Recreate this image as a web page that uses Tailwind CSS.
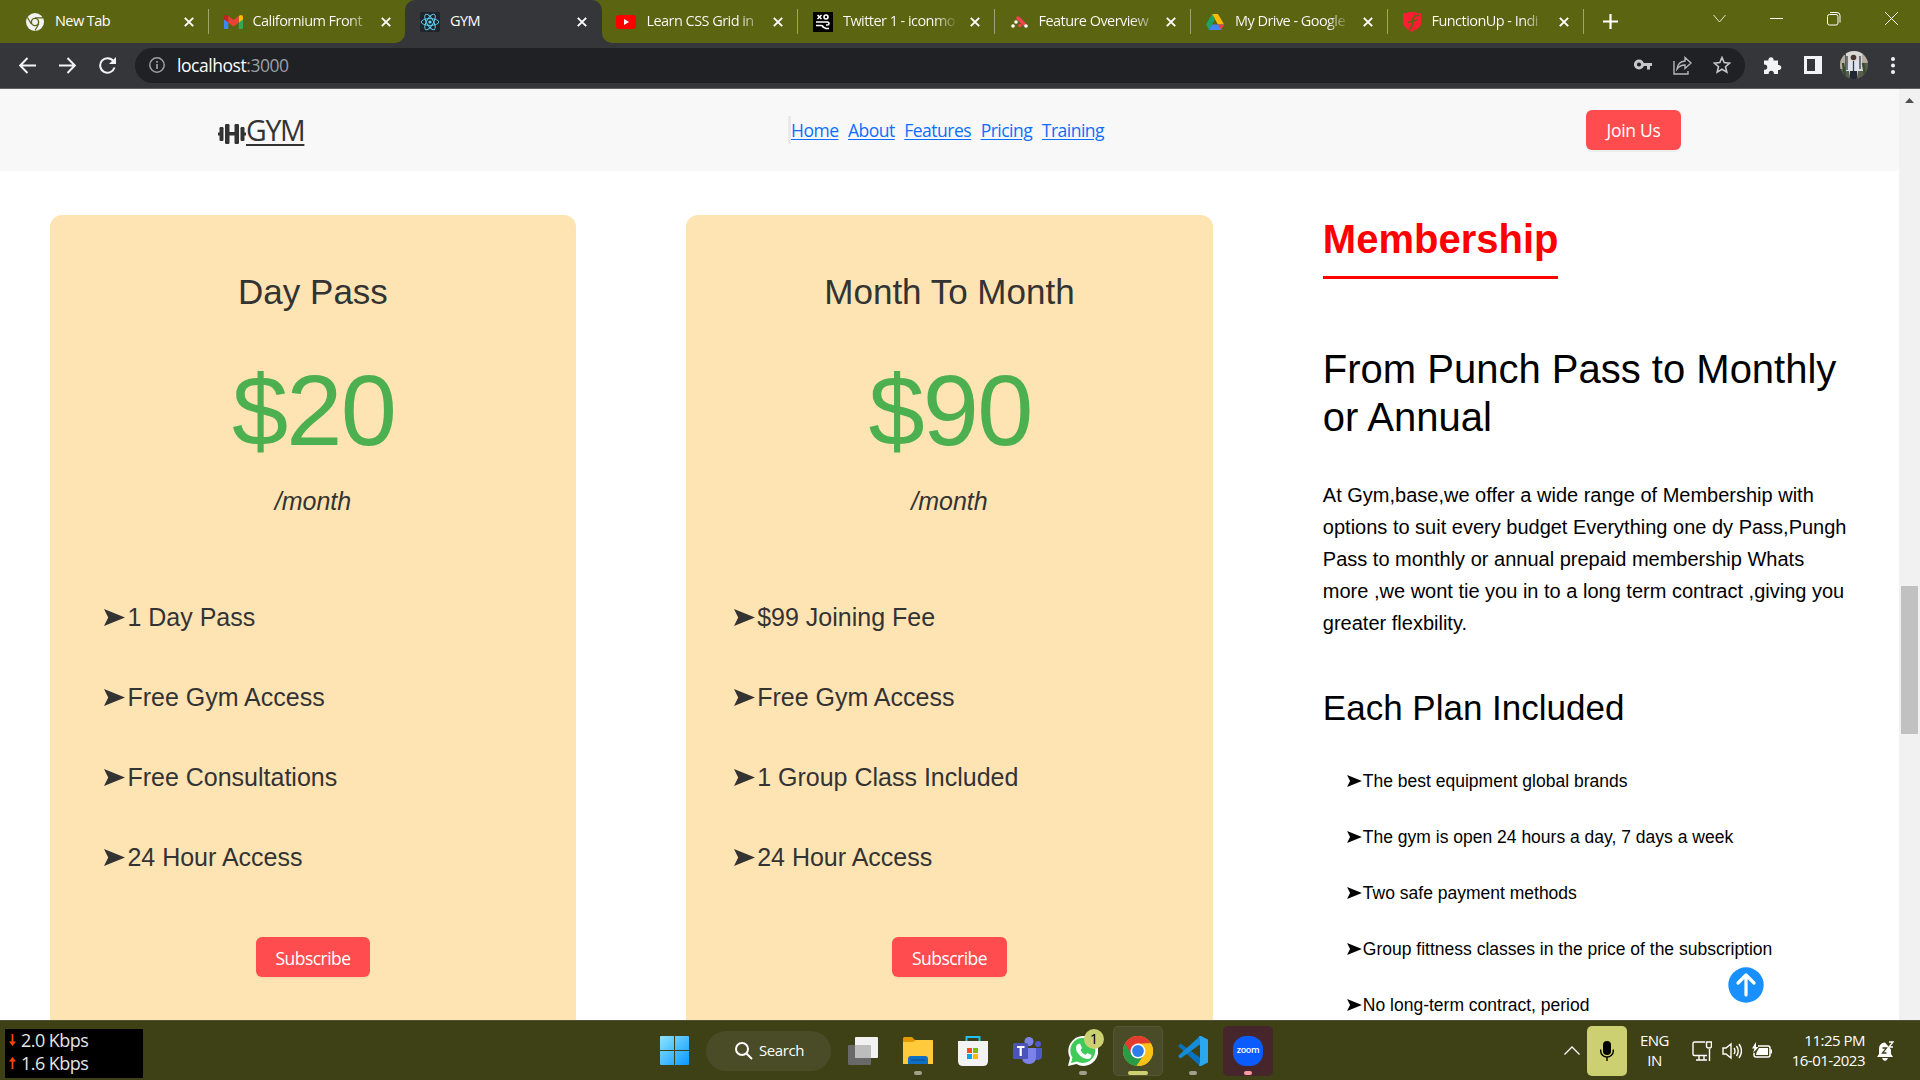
<!DOCTYPE html>
<html lang="en">
<head>
<meta charset="utf-8">
<title>GYM</title>
<script src="https://cdn.jsdelivr.net/npm/@tailwindcss/browser@4"></script>
</head>
<body class="w-[1920px] h-[1080px] overflow-hidden flex flex-col bg-white font-['Open_Sans',sans-serif]">
<svg class="hidden">
  <symbol id="close" viewBox="0 0 10 10"><path d="M.8.8l8.4 8.4M9.2.8L.8 9.2" stroke="#fff" stroke-width="1.9" fill="none"/></symbol>
  <symbol id="bullet" viewBox="0 0 21 17"><path d="M0 0L21 8.500 0 17 4.200 8.500z" fill="currentColor"/></symbol>
</svg>

<!-- Tab strip -->
<header class="h-[43px] shrink-0 bg-[#5b6411] flex text-white text-[14.500px] tracking-[-0.550px] pl-3">
  <div class="w-[196.500px] flex items-center pl-[14px]">
    <svg class="size-[18px] shrink-0" viewBox="0 0 18 18"><circle cx="9" cy="9" r="9" fill="#f1f3f4"/><circle cx="9" cy="9" r="4.300" fill="#5b6411"/><circle cx="9" cy="9" r="2.900" fill="#f1f3f4"/><path d="M9 4.800h8M5.300 11L1.500 4.500M12.700 11L9 17.500" stroke="#5b6411" stroke-width="1.200"/></svg>
    <span class="ml-[11px] -mt-px w-[117px] overflow-hidden whitespace-nowrap">New Tab</span>
    <svg class="ml-3 size-[10px] shrink-0"><use href="#close"/></svg>
    <i class="ml-[14px] w-px h-[25px] bg-[#a0a36f]"></i>
  </div>
  <div class="w-[196.500px] flex items-center pl-[15px]">
    <svg class="w-[19px] h-[14px] shrink-0" viewBox="0 0 19 14"><path d="M0 2v11a1 1 0 001 1h3.300V5z" fill="#4285f4"/><path d="M19 2v11a1 1 0 01-1 1h-3.300V5z" fill="#34a853"/><path d="M14.700 1L17 0q2 0 2 2v2.500l-4.300 3z" fill="#fbbc04"/><path d="M4.300 1L2 0Q0 0 0 2v2.500l4.300 3z" fill="#c5221f"/><path d="M4.300 1l5.200 4 5.200-4v6.500l-5.200 4-5.200-4z" fill="#ea4335"/></svg>
    <span class="ml-[10px] -mt-px w-[119px] overflow-hidden whitespace-nowrap bg-linear-to-r from-white from-80% to-white/0 bg-clip-text text-transparent">Californium Front</span>
    <svg class="ml-[9px] size-[10px] shrink-0"><use href="#close"/></svg>
  </div>
  <div class="relative w-[196.500px] flex items-center pl-[15px] bg-[#35363a] rounded-t-[10px]">
    <svg class="absolute bottom-0 -left-[10px] size-[10px]" viewBox="0 0 10 10"><path d="M10 0v10H0A10 10 0 0010 0z" fill="#35363a"/></svg>
    <svg class="absolute bottom-0 -right-[10px] size-[10px]" viewBox="0 0 10 10"><path d="M0 0v10h10A10 10 0 010 0z" fill="#35363a"/></svg>
    <svg class="size-5 shrink-0" viewBox="0 0 20 20"><rect width="20" height="20" rx="2" fill="#20232a"/><g fill="none" stroke="#61dafb" stroke-width=".9"><ellipse cx="10" cy="10" rx="8.800" ry="3.400"/><ellipse cx="10" cy="10" rx="8.800" ry="3.400" transform="rotate(60 10 10)"/><ellipse cx="10" cy="10" rx="8.800" ry="3.400" transform="rotate(120 10 10)"/></g><circle cx="10" cy="10" r="1.600" fill="#61dafb"/></svg>
    <span class="ml-[10px] -mt-px w-[118px] overflow-hidden whitespace-nowrap">GYM</span>
    <svg class="ml-[9px] size-[10px] shrink-0"><use href="#close"/></svg>
  </div>
  <div class="w-[196.500px] flex items-center pl-[14px]">
    <svg class="w-5 h-[14px] shrink-0" viewBox="0 0 20 14"><rect width="20" height="14" rx="3" fill="#f00"/><path d="M8 4l5 3-5 3z" fill="#fff"/></svg>
    <span class="ml-[11px] -mt-px w-[116px] overflow-hidden whitespace-nowrap bg-linear-to-r from-white from-80% to-white/20 bg-clip-text text-transparent">Learn CSS Grid in</span>
    <svg class="ml-3 size-[10px] shrink-0"><use href="#close"/></svg>
    <i class="ml-[14px] w-px h-[25px] bg-[#a0a36f]"></i>
  </div>
  <div class="w-[196.500px] flex items-center pl-[15px]">
    <svg class="size-5 shrink-0" viewBox="0 0 20 20"><rect width="20" height="20" fill="#000"/><g fill="none" stroke="#fff" stroke-width="1.600"><path d="M4.500 3l4 4M8.500 3l-4 4"/><circle cx="13" cy="5" r="2"/><path d="M3 10h11.500a1.500 1.500 0 010 3H13M3 13.500h5q2 0 2 1.500l3 1.500h3"/></g></svg>
    <span class="ml-[10px] -mt-px w-[115px] overflow-hidden whitespace-nowrap bg-linear-to-r from-white from-80% to-white/0 bg-clip-text text-transparent">Twitter 1 - iconmo</span>
    <svg class="ml-3 size-[10px] shrink-0"><use href="#close"/></svg>
    <i class="ml-[14px] w-px h-[25px] bg-[#a0a36f]"></i>
  </div>
  <div class="w-[196.500px] flex items-center pl-[16px]">
    <svg class="w-[17px] h-[12px] shrink-0" viewBox="0 0 17 12"><path d="M7 2l6 6" stroke="#f44250" stroke-width="3.500" stroke-linecap="round"/><g fill="#fff"><circle cx="2" cy="10" r="1.800"/><circle cx="5" cy="6" r="1.800"/><circle cx="15" cy="10" r="1.800"/></g><circle cx="9" cy="9.500" r="1.800" fill="#f44250"/></svg>
    <span class="ml-[11px] mr-px -mt-px w-[115px] overflow-hidden whitespace-nowrap bg-linear-to-r from-white from-80% to-white/30 bg-clip-text text-transparent">Feature Overview</span>
    <svg class="ml-3 size-[10px] shrink-0"><use href="#close"/></svg>
    <i class="ml-[14px] w-px h-[25px] bg-[#a0a36f]"></i>
  </div>
  <div class="w-[196.500px] flex items-center pl-[15px]">
    <svg class="w-[18px] h-4 shrink-0" viewBox="0 0 18 16"><path d="M6 0h6l6 10.500h-6z" fill="#ffba00"/><path d="M6 0l3 5.300L3 16 0 10.500z" fill="#1ea362"/><path d="M5.800 10.500H18L15 16H3z" fill="#4285f4"/><path d="M12 10.500h6L15 16z" fill="#ea4335"/></svg>
    <span class="ml-[11px] mr-px -mt-px w-[115px] overflow-hidden whitespace-nowrap bg-linear-to-r from-white from-80% to-white/0 bg-clip-text text-transparent">My Drive - Google</span>
    <svg class="ml-3 size-[10px] shrink-0"><use href="#close"/></svg>
    <i class="ml-[14px] w-px h-[25px] bg-[#a0a36f]"></i>
  </div>
  <div class="w-[196.500px] flex items-center pl-[15px]">
    <svg class="w-[18px] h-[20px] shrink-0" viewBox="0 0 18 20"><path d="M0 1q5 .5 6-1h6q1 1.500 6 1V12q-1 4-6.500 6L9 20l-2-1Q1 15 0 12z" fill="#fa1e32"/><path d="M16 3.500q-6-.5-6.500 4.500v3q0 4-3 6.500M5 10.500l9-2.500" stroke="#5b6411" stroke-width="1.600" fill="none"/></svg>
    <span class="ml-[11px] mr-px -mt-px w-[115px] overflow-hidden whitespace-nowrap bg-linear-to-r from-white from-80% to-white/0 bg-clip-text text-transparent">FunctionUp - Indi</span>
    <svg class="ml-3 size-[10px] shrink-0"><use href="#close"/></svg>
    <i class="ml-[14px] w-px h-[25px] bg-[#a0a36f]"></i>
  </div>
  <div class="flex items-center pl-[19px]"><svg class="size-[15px]" viewBox="0 0 15 15"><path d="M7.500 0v15M0 7.500h15" stroke="#fff" stroke-width="2.200"/></svg></div>
  <div class="ml-auto flex pt-3 pr-[22px] items-start">
    <svg class="w-[13px] h-[13px]" viewBox="0 0 13 13" fill="none" stroke="#e4e6cf"><path d="M.5 3l6 7 6-7"/></svg>
    <svg class="ml-11 w-[13px] h-[13px]" viewBox="0 0 13 13" stroke="#fff"><path d="M0 6.500h13"/></svg>
    <svg class="ml-11 w-[14px] h-[14px]" viewBox="0 0 14 14" fill="none" stroke="#fff"><rect x=".5" y="2.500" width="10.500" height="10.500" rx="2"/><path d="M3 .5h7q3 0 3 3v7"/></svg>
    <svg class="ml-11 w-[13px] h-[13px]" viewBox="0 0 13 13" stroke="#fff"><path d="M0 0l13 13M13 0L0 13"/></svg>
  </div>
</header>

<!-- Toolbar -->
<div class="h-[46px] shrink-0 bg-[#35363a] border-b border-[#5f6063] flex items-center pl-[19px] pr-[19px] pb-px">
  <svg class="size-[17px]" viewBox="0 0 17 17" fill="none" stroke="#f1f3f4" stroke-width="1.900"><path d="M17 8.500H1.500M8.500 1L1.200 8.500 8.500 16"/></svg>
  <svg class="ml-[23px] size-[17px]" viewBox="0 0 17 17" fill="none" stroke="#f1f3f4" stroke-width="1.900"><path d="M0 8.500h15.500M8.500 1l7.300 7.500L8.500 16"/></svg>
  <svg class="ml-[23px] size-[17px]" viewBox="0 0 17 17"><path d="M14.300 4A7.300 7.300 0 1015.500 10.500" fill="none" stroke="#f1f3f4" stroke-width="2"/><path d="M17 0v7h-7z" fill="#f1f3f4"/></svg>
  <div class="ml-[19px] w-[1610px] h-[35px] rounded-full bg-[#202124] flex items-center pl-[14px] pr-[14px]">
    <svg class="size-4" viewBox="0 0 16 16"><circle cx="8" cy="8" r="7.200" fill="none" stroke="#9aa0a6" stroke-width="1.500"/><path d="M8 7v5M8 4v1.800" stroke="#9aa0a6" stroke-width="1.700"/></svg>
    <span class="ml-3 text-[17.500px] tracking-[-0.450px] text-[#9aa0a6]"><span class="text-white">localhost</span>:3000</span>
    <svg class="ml-auto w-[18px] h-[12px]" viewBox="0 0 18 12"><circle cx="5" cy="5.500" r="3.600" fill="none" stroke="#c5c7c9" stroke-width="3"/><path d="M8 5.500h10M14.500 5.500v5" stroke="#c5c7c9" stroke-width="3"/></svg>
    <svg class="ml-[21px] size-[19px]" viewBox="0 0 19 19" fill="none" stroke="#b5b7b9" stroke-width="1.400"><path d="M1 5v13h14v-3M4 13q1-7.500 8-8V1.500L18 7l-6 5.500V9q-5 0-8 4z"/></svg>
    <svg class="ml-[21px] size-[18px]" viewBox="0 0 18 18"><path d="M9 1.500l2.200 5.100 5.500.5-4.200 3.600 1.300 5.400L9 13.300l-4.800 2.800 1.300-5.400L1.300 7.100l5.500-.5z" fill="none" stroke="#c5c7c9" stroke-width="1.600"/></svg>
  </div>
  <svg class="ml-[19px] size-[18px]" viewBox="0 0 18 18"><path d="M0 4.500h4.500a2.600 2.600 0 115 0H14V9a2.600 2.600 0 110 5v4H9.800a2.600 2.600 0 10-5 0H0v-4.300a2.600 2.600 0 100-5z" fill="#f1f3f4"/></svg>
  <svg class="ml-[22px] w-[18px] h-[18px]" viewBox="0 0 18 18"><path d="M0 0h18v18H0zM3 3v12h8V3z" fill="#f1f3f4" fill-rule="evenodd"/></svg>
  <svg class="ml-[18px] size-7" viewBox="0 0 28 28"><defs><clipPath id="face"><circle cx="14" cy="14" r="14"/></clipPath></defs><g clip-path="url(#face)"><path d="M0 0h28v28H0z" fill="#5a5c50"/><path d="M6 0h17v20H6z" fill="#d9d8d2"/><path d="M0 4h5v14H0zM22 3h6v9h-6z" fill="#b5aea0"/><circle cx="13.500" cy="6.500" r="2.800" fill="#4a3630"/><path d="M9 10h9l2 9-2 1-1 6h-7l-1-6-2-1z" fill="#dfe3ee"/><path d="M13.500 10v10M7 5v14M20 5v13" stroke="#333a52" stroke-width="1.300"/><path d="M10 20h7v8h-7z" fill="#202635"/><path d="M23 12l2 12M3 12l2 13" stroke="#33502c" stroke-width="2.500"/></g></svg>
  <svg class="ml-[23px] w-1 h-[17px]" viewBox="0 0 4 17" fill="#f1f3f4"><circle cx="2" cy="2" r="2"/><circle cx="2" cy="8.500" r="2"/><circle cx="2" cy="15" r="2"/></svg>
</div>

<!-- Page -->
<div class="h-[931px] shrink-0 flex">
  <main class="relative w-[1899px] h-full overflow-hidden text-[#333]">
    <nav class="h-[82px] bg-[#f8f8f8] flex items-center justify-between pl-[218px] pr-[218px]">
      <a class="flex items-center w-[570px]">
        <svg class="w-[28px] h-5 mt-[7px]" viewBox="0 0 28 20" fill="#333"><rect y="8.500" width="2.500" height="3"/><rect x="25.500" y="8.500" width="2.500" height="3"/><rect x="8" y="8" width="12" height="3.500"/><rect x="1.500" y="3" width="4" height="14" rx="1.200"/><rect x="7" width="4.500" height="20" rx="1.200"/><rect x="16.500" width="4.500" height="20" rx="1.200"/><rect x="22.500" y="3" width="4" height="14" rx="1.200"/></svg>
        <span class="text-[28.500px] leading-[36px] tracking-[-1.300px] underline decoration-2 underline-offset-[3px]">GYM</span>
      </a>
      <div class="flex items-center border-l-[3px] border-[#e9e9e9] h-7 text-[17.500px] text-[#0d6efd] tracking-[-0.500px] gap-[9.500px] mr-auto">
        <a class="underline underline-offset-2">Home</a><a class="underline underline-offset-2">About</a><a class="underline underline-offset-2">Features</a><a class="underline underline-offset-2">Pricing</a><a class="underline underline-offset-2">Training</a>
      </div>
      <button class="w-[95px] h-10 rounded-[6px] bg-[#ff4d4f] text-white text-[17.500px] tracking-[-0.300px] pt-px shadow-[0_2px_0_rgba(0,0,0,0.04)]">Join Us</button>
    </nav>

    <section class="grid grid-cols-3 gap-x-[109.500px] px-[50px] pt-11 font-['Liberation_Sans',sans-serif]">
      <article class="bg-[#ffe4b3] rounded-[12px] pt-14 h-[900px] mr-[0.700px] flex flex-col items-center">
        <h3 class="text-[35px] leading-[42px]">Day Pass</h3>
        <p class="mt-[37px] mb-px pl-px text-[101px] leading-[120px] tracking-[-1.800px] text-[#4caf50]">$20</p>
        <em class="mt-[15px] text-[25px] leading-[30px]">/month</em>
        <ul class="mt-[61px] self-stretch pl-[54px] text-[25px] leading-[80px]">
          <li class="flex items-center gap-[2.400px]"><svg class="w-[21px] h-[17px]"><use href="#bullet"/></svg>1 Day Pass</li>
          <li class="flex items-center gap-[2.400px]"><svg class="w-[21px] h-[17px]"><use href="#bullet"/></svg>Free Gym Access</li>
          <li class="flex items-center gap-[2.400px]"><svg class="w-[21px] h-[17px]"><use href="#bullet"/></svg>Free Consultations</li>
          <li class="flex items-center gap-[2.400px]"><svg class="w-[21px] h-[17px]"><use href="#bullet"/></svg>24 Hour Access</li>
        </ul>
        <button class="mt-10 w-[114px] h-10 rounded-[6px] bg-[#ff4d4f] text-white text-[17.500px] pt-[3px] tracking-[-0.550px] font-['Open_Sans',sans-serif] shadow-[0_2px_0_rgba(0,0,0,0.04)]">Subscribe</button>
      </article>
      <article class="bg-[#ffe4b3] rounded-[12px] pt-14 h-[900px] flex flex-col items-center">
        <h3 class="text-[35px] leading-[42px]">Month To Month</h3>
        <p class="mt-[37px] mb-px pl-px text-[101px] leading-[120px] tracking-[-1.800px] text-[#4caf50]">$90</p>
        <em class="mt-[15px] text-[25px] leading-[30px]">/month</em>
        <ul class="mt-[61px] self-stretch pl-[48px] text-[25px] leading-[80px]">
          <li class="flex items-center gap-[2px]"><svg class="w-[21px] h-[17px]"><use href="#bullet"/></svg>$99 Joining Fee</li>
          <li class="flex items-center gap-[2px]"><svg class="w-[21px] h-[17px]"><use href="#bullet"/></svg>Free Gym Access</li>
          <li class="flex items-center gap-[2px]"><svg class="w-[21px] h-[17px]"><use href="#bullet"/></svg>1 Group Class Included</li>
          <li class="flex items-center gap-[2px]"><svg class="w-[21px] h-[17px]"><use href="#bullet"/></svg>24 Hour Access</li>
        </ul>
        <button class="mt-10 w-[115px] h-10 rounded-[6px] bg-[#ff4d4f] text-white text-[17.500px] pt-[3px] tracking-[-0.550px] font-['Open_Sans',sans-serif] shadow-[0_2px_0_rgba(0,0,0,0.04)]">Subscribe</button>
      </article>
      <article class="text-black pl-[0.500px] flex flex-col">
        <h2 class="self-start text-[40px] leading-[48px] font-bold text-[#f00] pb-[13px] border-b-[3px] border-[#f00]">Membership</h2>
        <h2 class="mt-[66px] text-[40px] leading-[48px] whitespace-nowrap">From Punch Pass to Monthly<br>or Annual</h2>
        <p class="mt-[38px] text-[20px] leading-8 whitespace-nowrap">At Gym,base,we offer a wide range of Membership with<br>options to suit every budget Everything one dy Pass,Pungh<br>Pass to monthly or annual prepaid membership Whats<br>more ,we wont tie you in to a long term contract ,giving you<br>greater flexbility.</p>
        <h3 class="mt-12 text-[35px] leading-[42px]">Each Plan Included</h3>
        <ul class="mt-6 pl-6 text-[17.500px] leading-[56px] whitespace-nowrap">
          <li class="flex items-center gap-px"><svg class="w-[15px] h-[12px]"><use href="#bullet"/></svg>The best equipment global brands</li>
          <li class="flex items-center gap-px"><svg class="w-[15px] h-[12px]"><use href="#bullet"/></svg>The gym is open 24 hours a day, 7 days a week</li>
          <li class="flex items-center gap-px"><svg class="w-[15px] h-[12px]"><use href="#bullet"/></svg>Two safe payment methods</li>
          <li class="flex items-center gap-px"><svg class="w-[15px] h-[12px]"><use href="#bullet"/></svg>Group fittness classes in the price of the subscription</li>
          <li class="flex items-center gap-px"><svg class="w-[15px] h-[12px]"><use href="#bullet"/></svg>No long-term contract, period</li>
        </ul>
      </article>
    </section>
    <svg class="absolute right-[135px] bottom-[17px] size-9" viewBox="0 0 36 36"><circle cx="18" cy="18" r="17.700" fill="#1890ff"/><path d="M18 28V9M10 16l8-8 8 8" fill="none" stroke="#fff" stroke-width="3.200" stroke-linecap="round" stroke-linejoin="round"/></svg>
  </main>
  <!-- Scrollbar -->
  <div class="w-[21px] bg-[#f1f1f1] flex flex-col items-center">
    <svg class="mt-[9px] w-[9px] h-[5px] shrink-0" viewBox="0 0 9 5"><path d="M0 5L4.500 0 9 5z" fill="#505050"/></svg>
    <div class="mt-[483px] w-[17px] h-[148px] bg-[#c1c1c1]"></div>
  </div>
</div>

<!-- Taskbar -->
<footer class="h-[60px] shrink-0 bg-[#3e4016] border-t border-[#505330] flex items-center text-white">
  <div class="ml-[5px] mt-[5px] w-[138px] h-[49px] bg-black text-[#e4e4e4] text-[18px] leading-[23px] tracking-[-0.550px] pl-1">
    <div class="flex items-center h-[23px]"><svg class="w-[7px] h-3 mr-[5px]" viewBox="0 0 7 12"><path d="M3.500 0v8" stroke="#ff4500" stroke-width="1.800"/><path d="M0 7.500h7L3.500 12z" fill="#ff4500"/></svg>2.0 Kbps</div>
    <div class="flex items-center h-[23px]"><svg class="w-[7px] h-3 mr-[5px]" viewBox="0 0 7 12"><path d="M3.500 12V4" stroke="#ff4500" stroke-width="1.800"/><path d="M0 4.500h7L3.500 0z" fill="#ff4500"/></svg>1.6 Kbps</div>
  </div>
  <svg class="ml-[517px] size-[29px]" viewBox="0 0 29 29"><defs><linearGradient id="win" x1="0" y1="0" x2="29" y2="29" gradientUnits="userSpaceOnUse"><stop stop-color="#8ce4ff"/><stop offset="1" stop-color="#0a98ff"/></linearGradient></defs><path d="M1 0h13v14H0V1q0-1 1-1zM15 0h13q1 0 1 1v13H15zM0 15h14v14H1q-1 0-1-1zM15 15h14v13q0 1-1 1H15z" fill="url(#win)"/></svg>
  <div class="ml-[17px] w-[125px] h-10 rounded-full bg-[#4a4b27] flex items-center pl-[29px] text-[15px] tracking-[-0.400px]">
    <svg class="size-[18px] mr-[6px]" viewBox="0 0 18 18" fill="none" stroke="#fff" stroke-width="2"><circle cx="7" cy="7" r="6"/><path d="M11.500 11.500l5.500 5.500"/></svg>Search
  </div>
  <svg class="ml-[17px] w-[30px] h-[28px]" viewBox="0 0 30 28"><rect y="8" width="23" height="20" rx="1" fill="#69696a"/><rect x="7" width="23" height="21" rx="1" fill="#f1f1f1"/><path d="M7 8h16v13H7z" fill="#bdbdbd"/></svg>
  <div class="relative ml-[25px] w-[30px] h-[59px] flex items-center justify-center">
    <svg class="w-[30px] h-[27px]" viewBox="0 0 30 27"><path d="M0 1.500Q0 0 1.500 0H9l3 3h17q1 0 1 1v5H0z" fill="#e19b00"/><path d="M0 5h10l3-2h16q1 0 1 1v23H0z" fill="#ffcb3d"/><path d="M5 27v-5q0-3 3-3h14q3 0 3 3v5z" fill="#0f6fc5"/><path d="M8 23h14" stroke="#0a4a8c"/></svg>
    <i class="absolute left-[11px] bottom-[5px] w-2 h-1 rounded-full bg-[#a0a18d]"></i>
  </div>
  <svg class="ml-[25px] w-[30px] h-[30px]" viewBox="0 0 30 30"><path d="M8.500 6V1h13v5" fill="none" stroke="#22c0ee" stroke-width="2"/><path d="M0 5h30v20q0 5-5 5H5q-5 0-5-5z" fill="#f3f3f3"/><path d="M9 12h5v5H9z" fill="#f25022"/><path d="M15 12h5v5h-5z" fill="#7fba00"/><path d="M9 18h5v5H9z" fill="#00a4ef"/><path d="M15 18h5v5h-5z" fill="#ffb900"/></svg>
  <svg class="ml-[25px] w-[30px] h-[28px]" viewBox="0 0 30 28"><circle cx="25" cy="7" r="3" fill="#5059c9"/><path d="M20 11h9v8q0 4-5 4h-4z" fill="#5059c9"/><circle cx="16" cy="4.500" r="4.500" fill="#7b83eb"/><path d="M9 11h14v9q0 7-7 7t-7-7z" fill="#7b83eb"/><rect y="6" width="15" height="16" rx="1.500" fill="#4b53bc"/><path d="M4 10h7.500M7.700 10v9" stroke="#fff" stroke-width="2.200"/></svg>
  <div class="relative ml-[25px] w-[30px] h-[59px] flex items-center">
    <svg class="size-[30px]" viewBox="0 0 30 30"><path d="M0 30l2-8A15 15 0 1115.500 30q-4 0-7-2z" fill="#fff"/><path d="M3 27l1.500-5.500A12.500 12.500 0 119 25.500z" fill="#3fca5a"/><path d="M10 8l2-.5L14 12l-1.500 2q1.500 3.500 5 5l1.800-2 4.200 2q0 4-4 4-5-.5-8.500-4.500T8 12q0-3 2-4z" fill="#fff"/></svg>
    <span class="absolute left-4 top-2 size-5 rounded-full bg-[#cdd070] text-black text-[14px] leading-5 text-center font-['Noto_Sans',sans-serif]">1</span>
    <i class="absolute left-[11px] bottom-[5px] w-2 h-1 rounded-full bg-[#a0a18d]"></i>
  </div>
  <div class="relative ml-[15px] size-[50px] rounded-[5px] bg-[#4a4b27] border border-[#555636] flex items-center justify-center">
    <svg class="size-[30px]" viewBox="0 0 30 30"><circle cx="15" cy="15" r="15" fill="#fbc116"/><path d="M15 15L2 7.500A15 15 0 0013.500 30L21.500 18z" fill="#2a9c48"/><path d="M2 7.500A15 15 0 0128 7.500H15l-6.500 11z" fill="#e33b2e"/><path d="M28 7.500A15 15 0 0113.500 30L22 18V7.500z" fill="#fbc116"/><circle cx="15" cy="15" r="7.500" fill="#fff"/><circle cx="15" cy="15" r="5.900" fill="#2f7de9"/></svg>
    <i class="absolute left-[14px] bottom-0 w-5 h-1 rounded-full bg-[#cdd070]"></i>
  </div>
  <div class="relative ml-[15px] w-[30px] h-[59px] flex items-center">
    <svg class="size-[30px]" viewBox="0 0 30 30"><path d="M0 10l2.500-2.500L24 23v6.500L22 30z" fill="#0a72bd"/><path d="M0 20l2.500 2.500L24 7V.5L22 0z" fill="#168bd6"/><path d="M21 0h2l7 3.500v23L23 30h-2l1-4V4z" fill="#2aa7ee"/></svg>
    <i class="absolute left-[11px] bottom-[5px] w-2 h-1 rounded-full bg-[#a0a18d]"></i>
  </div>
  <div class="relative ml-[15px] size-[50px] rounded-[5px] bg-[#46262a] flex items-center justify-center">
    <div class="size-[30px] rounded-[13px] bg-[#0b5cff] text-[9px] leading-[28px] text-center font-semibold tracking-[-0.300px]">zoom</div>
    <i class="absolute left-[21px] bottom-[1px] w-2 h-1 rounded-full bg-[#ff99a4]"></i>
  </div>
  <div class="ml-auto flex items-center pr-[26px]">
    <svg class="w-[16px] h-[9px]" viewBox="0 0 16 9" fill="none" stroke="#fff" stroke-width="1.300"><path d="M.5 8.500L8 1l7.500 7.500"/></svg>
    <div class="ml-[7px] w-10 h-[50px] rounded-[5px] bg-[#cdd070] flex items-center justify-center"><svg class="w-[14px] h-5" viewBox="0 0 14 20"><rect x="3" width="8" height="14" rx="4"/><path d="M.7 8.500v1.500a6.300 6 0 0012.600 0V8.500M7 16v4" fill="none" stroke="#000" stroke-width="1.400"/></svg></div>
    <div class="ml-[12px] w-[31px] text-center text-[15px] leading-5 tracking-[-0.500px] -mt-px">ENG<br>IN</div>
    <svg class="ml-[22px] w-[20px] h-[20px]" viewBox="0 0 20 20" fill="none" stroke="#fff" stroke-width="1.400"><path d="M13 1H2.500Q1 1 1 2.500v10.500q0 1.500 1.500 1.500H15M4 19h11M7 15v4M12 15v4M17.500 8v12M14.500 1h5v4q0 2-2.500 2t-2.500-2z"/></svg>
    <svg class="ml-[10px] w-[20px] h-[18px]" viewBox="0 0 20 18" fill="none" stroke="#fff" stroke-width="1.400"><path d="M1 6v6h3l5 4V2L4 6zM12 6q2 3 0 6M14.500 4q3.500 5 0 10M17 2q5 7 0 14"/></svg>
    <svg class="ml-[10px] w-[20px] h-[18px]" viewBox="0 0 20 18"><path d="M6 4h10q2 0 2 2v7q0 2-2 2H4q-2 0-2-2v-2" fill="none" stroke="#fff" stroke-width="1.500"/><path d="M4.500 10.500L7 6h9v7H4zM18.500 7.500H20v4h-1.500zM4 0L0 6.500h2.500L1 11l5.500-6H4z" fill="#fff"/></svg>
    <div class="ml-5 w-[73px] flex flex-col items-end text-[15px] leading-5 tracking-[-0.500px] whitespace-nowrap -mt-px"><span>11:25 PM</span><span>16-01-2023</span></div>
    <svg class="ml-3 w-[17px] h-[20px]" viewBox="0 0 17 20"><path d="M0 16l2-3V8q0-6 6-6.500l6 7V13l2 3zM5 17h6q-1 3-3 3t-3-3z" fill="#fff"/><path d="M5.500 7h4l-4 5h4" fill="none" stroke="#3e4016" stroke-width="1.300"/><path d="M12 1h4l-4 5h4" fill="none" stroke="#fff" stroke-width="1.300"/></svg>
  </div>
</footer>
</body>
</html>
